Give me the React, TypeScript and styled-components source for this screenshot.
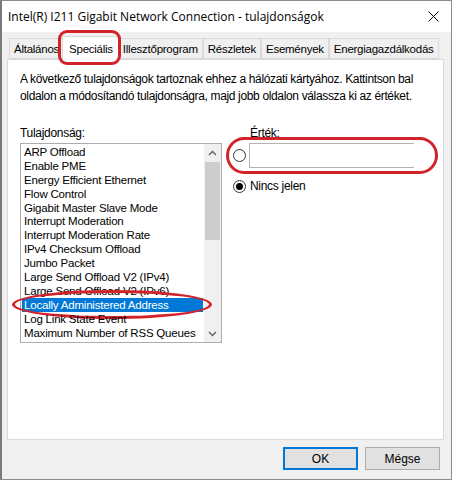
import { FC } from "react";
import styled, { createGlobalStyle } from "styled-components";

const Global = createGlobalStyle`
  html, body {
    margin: 0;
    padding: 0;
    background: #f0f0f0;
  }
  * {
    box-sizing: border-box;
  }
`;

const Window = styled.div`
  width: 452px;
  height: 480px;
  display: flex;
  flex-direction: column;
  background: #f0f0f0;
  border: 1px solid #8c8c8c;
  border-left: 2px solid #7a7a7a;
  font-family: "Liberation Sans", Arial, sans-serif;
  font-size: 11px;
  color: #000;
`;

const TitleBar = styled.div`
  height: 31px;
  display: flex;
  align-items: center;
  justify-content: space-between;
  padding: 0 12px 0 6px;
  background: #fff;
`;

const Title = styled.div`
  font-family: "Open Sans", "Noto Sans", sans-serif;
  font-size: 12px;
`;

const Close = styled.svg`
  width: 11px;
  height: 11px;
`;

const Body = styled.div`
  flex: 1;
  display: flex;
  flex-direction: column;
  padding: 4px 7px 0 5px;
`;

const TabStrip = styled.div`
  height: 23px;
  display: flex;
  align-items: flex-end;
  padding-left: 2px;
  position: relative;
  z-index: 1;
`;

const Tab = styled.div<{ $active?: boolean }>`
  position: relative;
  height: ${({ $active }) => ($active ? "24px" : "21px")};
  margin-bottom: ${({ $active }) => ($active ? "-1px" : "0")};
  padding: 0 ${({ $active }) => ($active ? "6px" : "4px")};
  display: flex;
  align-items: center;
  font-size: 11.5px;
  letter-spacing: -0.25px;
  background: ${({ $active }) => ($active ? "#fff" : "#f0f0f0")};
  border: 1px solid #d9d9d9;
  border-bottom: ${({ $active }) => ($active ? "none" : "1px solid #d9d9d9")};
  margin-left: ${({ $active }) => ($active ? "-2px" : "0")};
  margin-right: ${({ $active }) => ($active ? "-2px" : "0")};
  z-index: ${({ $active }) => ($active ? 2 : 0)};
  & + & {
    border-left: ${({ $active }) => ($active ? "1px solid #d9d9d9" : "none")};
  }
`;

const TabMark = styled.div`
  position: absolute;
  left: -5px;
  right: -2px;
  top: -7px;
  bottom: -5px;
  border: 3px solid #d2232a;
  border-radius: 9px;
  pointer-events: none;
`;

const Panel = styled.div`
  height: 381px;
  background: #fff;
  border: 1px solid #d9d9d9;
  padding: 11px 12px 0 12px;
  display: flex;
  flex-direction: column;
`;

const Description = styled.p`
  margin: 0;
  font-size: 12px;
  letter-spacing: -0.35px;
  line-height: 17px;
`;

const Columns = styled.div`
  margin-top: 20px;
  display: grid;
  grid-template-columns: 202px 1fr;
  column-gap: 10px;
`;

const Column = styled.div`
  display: flex;
  flex-direction: column;
`;

const Label = styled.div<{ $indent?: number }>`
  height: 17px;
  line-height: 17px;
  font-size: 12px;
  letter-spacing: -0.3px;
  padding-left: ${({ $indent }) => $indent ?? 0}px;
`;

const ListBox = styled.div`
  position: relative;
  margin-top: 1px;
  height: 200px;
  border: 1px solid #adadad;
  display: flex;
`;

const Items = styled.div`
  flex: 1;
  padding: 1px 1px 0 1px;
`;

const Item = styled.div<{ $selected?: boolean }>`
  position: relative;
  height: 13.9px;
  line-height: 14px;
  font-size: 11.5px;
  letter-spacing: -0.2px;
  padding-left: 2px;
  white-space: nowrap;
  background: ${({ $selected }) => ($selected ? "#0078d7" : "transparent")};
  color: ${({ $selected }) => ($selected ? "#fff" : "#000")};
`;

const ItemMark = styled.div`
  position: absolute;
  left: -10px;
  right: -9px;
  top: -8px;
  bottom: -7px;
  border: 3px solid #d2232a;
  border-radius: 50% / 50%;
  pointer-events: none;
`;

const ScrollBar = styled.div`
  width: 17px;
  display: flex;
  flex-direction: column;
  background: #f0f0f0;
`;

const Arrow = styled.div`
  height: 17px;
  display: flex;
  align-items: center;
  justify-content: center;
`;

const Track = styled.div`
  flex: 1;
  display: flex;
  flex-direction: column;
  padding: 1px 1px 0 1px;
`;

const Thumb = styled.div`
  height: 78px;
  background: #cdcdcd;
`;

const ValueRow = styled.div`
  position: relative;
  margin-top: 1px;
  display: flex;
  align-items: center;
  gap: 3px;
  padding-left: 1px;
`;

const ValueMark = styled.div`
  position: absolute;
  left: -6px;
  right: -7px;
  top: -6px;
  bottom: -6px;
  border: 3px solid #d2232a;
  border-radius: 18px / 50%;
  pointer-events: none;
`;

const Radio = styled.span<{ $checked?: boolean }>`
  width: 13px;
  height: 13px;
  border-radius: 50%;
  border: 1px solid #333;
  background: #fff;
  display: inline-flex;
  align-items: center;
  justify-content: center;
  flex-shrink: 0;
  &::after {
    content: "";
    width: 7px;
    height: 7px;
    border-radius: 50%;
    background: ${({ $checked }) => ($checked ? "#000" : "transparent")};
  }
`;

const TextInput = styled.div`
  width: 165px;
  height: 25px;
  border: 1px solid #b4b4b4;
  border-right: none;
  background: #fff;
`;

const RadioRow = styled.div`
  margin-top: 11px;
  display: flex;
  align-items: center;
  gap: 4px;
  padding-left: 1px;
  font-size: 12px;
  letter-spacing: -0.3px;
`;

const Footer = styled.div`
  flex: 1;
  display: flex;
  justify-content: flex-end;
  align-items: center;
  gap: 7px;
  padding: 0 4px 2px 0;
`;

const Button = styled.button<{ $default?: boolean }>`
  width: 75px;
  height: 23px;
  font-family: "Liberation Sans", Arial, sans-serif;
  font-size: 12px;
  color: #000;
  background: #e1e1e1;
  border: 1px solid ${({ $default }) => ($default ? "#0078d7" : "#adadad")};
  box-shadow: ${({ $default }) => ($default ? "inset 0 0 0 1px #0078d7" : "none")};
  padding: 0;
`;

const tabs = [
  "Általános",
  "Speciális",
  "Illesztőprogram",
  "Részletek",
  "Események",
  "Energiagazdálkodás",
];

const properties = [
  "ARP Offload",
  "Enable PME",
  "Energy Efficient Ethernet",
  "Flow Control",
  "Gigabit Master Slave Mode",
  "Interrupt Moderation",
  "Interrupt Moderation Rate",
  "IPv4 Checksum Offload",
  "Jumbo Packet",
  "Large Send Offload V2 (IPv4)",
  "Large Send Offload V2 (IPv6)",
  "Locally Administered Address",
  "Log Link State Event",
  "Maximum Number of RSS Queues",
];

const selected = "Locally Administered Address";

const Chevron: FC<{ up?: boolean }> = ({ up }) => (
  <svg width="9" height="6" viewBox="0 0 9 6">
    <path
      d={up ? "M1 5 L4.5 1.5 L8 5" : "M1 1 L4.5 4.5 L8 1"}
      fill="none"
      stroke="#606060"
      strokeWidth="1.4"
    />
  </svg>
);

export default function App() {
  return (
    <>
      <Global />
      <Window>
        <TitleBar>
          <Title>Intel(R) I211 Gigabit Network Connection - tulajdonságok</Title>
          <Close viewBox="0 0 11 11">
            <path d="M0.5 0.5 L10.5 10.5 M10.5 0.5 L0.5 10.5" stroke="#000" strokeWidth="1" />
          </Close>
        </TitleBar>
        <Body>
          <TabStrip>
            {tabs.map((name) => (
              <Tab key={name} $active={name === "Speciális"}>
                {name}
                {name === "Speciális" && <TabMark />}
              </Tab>
            ))}
          </TabStrip>
          <Panel>
            <Description>
              A következő tulajdonságok tartoznak ehhez a hálózati kártyához. Kattintson bal
              oldalon a módosítandó tulajdonságra, majd jobb oldalon válassza ki az értéket.
            </Description>
            <Columns>
              <Column>
                <Label>Tulajdonság:</Label>
                <ListBox>
                  <Items>
                    {properties.map((name) => (
                      <Item key={name} $selected={name === selected}>
                        {name}
                        {name === selected && <ItemMark />}
                      </Item>
                    ))}
                  </Items>
                  <ScrollBar>
                    <Arrow>
                      <Chevron up />
                    </Arrow>
                    <Track>
                      <Thumb />
                    </Track>
                    <Arrow>
                      <Chevron />
                    </Arrow>
                  </ScrollBar>
                </ListBox>
              </Column>
              <Column>
                <Label $indent={18}>Érték:</Label>
                <ValueRow>
                  <Radio />
                  <TextInput />
                  <ValueMark />
                </ValueRow>
                <RadioRow>
                  <Radio $checked />
                  Nincs jelen
                </RadioRow>
              </Column>
            </Columns>
          </Panel>
          <Footer>
            <Button $default>OK</Button>
            <Button>Mégse</Button>
          </Footer>
        </Body>
      </Window>
    </>
  );
}
